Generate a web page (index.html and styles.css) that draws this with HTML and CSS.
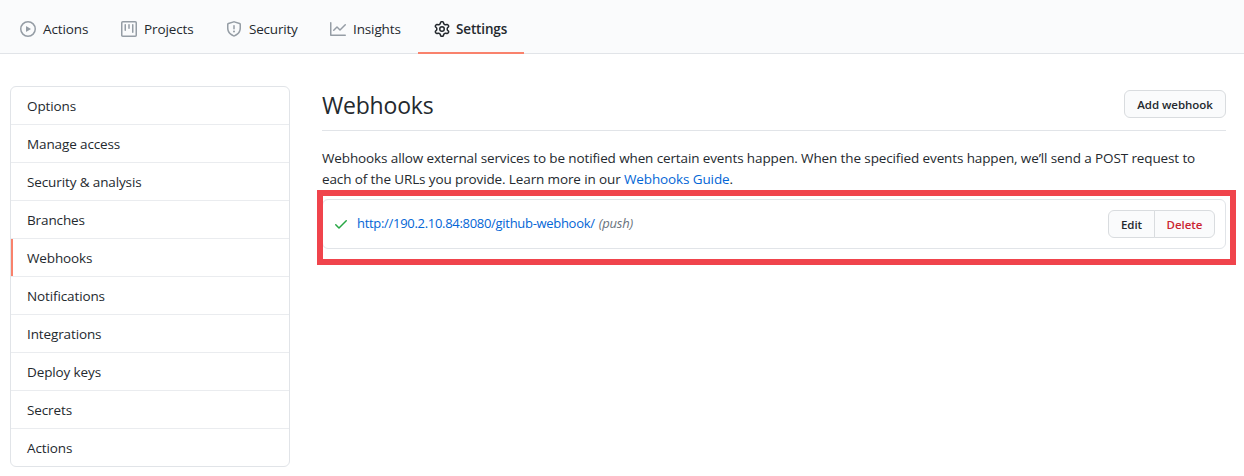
FILE: index.html
```html
<!DOCTYPE html>
<html lang="en">
<head>
<meta charset="utf-8">
<title>Webhooks</title>
<link rel="stylesheet" href="styles.css">
</head>
<body>
<nav class="tabs">
  <a class="tab tab-actions"><svg class="icon" viewBox="0 0 16 16"><path fill-rule="evenodd" d="M1.5 8a6.5 6.5 0 1113 0 6.5 6.5 0 01-13 0zM8 0a8 8 0 100 16A8 8 0 008 0zM6.379 5.227A.25.25 0 006 5.442v5.117a.25.25 0 00.379.214l4.264-2.559a.25.25 0 000-.428L6.379 5.227z"/></svg><span>Actions</span></a>
  <a class="tab tab-projects"><svg class="icon" viewBox="0 0 16 16"><path fill-rule="evenodd" d="M1.75 0A1.75 1.75 0 000 1.75v12.5C0 15.216.784 16 1.75 16h12.5A1.75 1.75 0 0016 14.25V1.75A1.75 1.75 0 0014.25 0H1.75zM1.5 1.75a.25.25 0 01.25-.25h12.5a.25.25 0 01.25.25v12.5a.25.25 0 01-.25.25H1.75a.25.25 0 01-.25-.25V1.75zM11.75 3a.75.75 0 00-.75.75v7.5a.75.75 0 001.5 0v-7.5a.75.75 0 00-.75-.75zm-8.25.75a.75.75 0 011.5 0v5.5a.75.75 0 01-1.5 0v-5.5zM8 3a.75.75 0 00-.75.75v3.5a.75.75 0 001.5 0v-3.5A.75.75 0 008 3z"/></svg><span>Projects</span></a>
  <a class="tab tab-security"><svg class="icon" viewBox="0 0 16 16"><path fill-rule="evenodd" d="M7.467.133a1.75 1.75 0 011.066 0l5.25 1.68A1.75 1.75 0 0115 3.48V7c0 1.566-.32 3.182-1.303 4.682-.983 1.498-2.585 2.813-5.032 3.855a1.7 1.7 0 01-1.33 0c-2.447-1.042-4.049-2.357-5.032-3.855C1.32 10.182 1 8.566 1 7V3.48a1.75 1.75 0 011.217-1.667l5.25-1.68zm.61 1.429a.25.25 0 00-.153 0l-5.25 1.68a.25.25 0 00-.174.238V7c0 1.358.275 2.666 1.057 3.86.784 1.194 2.121 2.34 4.366 3.297a.2.2 0 00.154 0c2.245-.956 3.582-2.104 4.366-3.298C13.225 9.666 13.5 8.36 13.5 7V3.48a.25.25 0 00-.174-.237l-5.25-1.68zM9 10.5a1 1 0 11-2 0 1 1 0 012 0zm-.25-5.75a.75.75 0 10-1.5 0v3a.75.75 0 001.5 0v-3z"/></svg><span>Security</span></a>
  <a class="tab tab-insights"><svg class="icon" viewBox="0 0 16 16"><path fill-rule="evenodd" d="M1.5 1.75a.75.75 0 00-1.5 0v12.5c0 .414.336.75.75.75h14.5a.75.75 0 000-1.5H1.5V1.75zm14.28 2.53a.75.75 0 00-1.06-1.06L10 7.94 7.53 5.47a.75.75 0 00-1.06 0L3.22 8.72a.75.75 0 001.06 1.06L7 7.06l2.47 2.47a.75.75 0 001.06 0l5.25-5.25z"/></svg><span>Insights</span></a>
  <a class="tab tab-settings"><svg class="icon" viewBox="0 0 16 16"><path fill-rule="evenodd" d="M7.429 1.525a6.593 6.593 0 011.142 0c.036.003.108.036.137.146l.289 1.105c.147.56.55.967.997 1.189.174.086.341.183.501.29.417.278.97.423 1.53.27l1.102-.303c.11-.03.175.016.195.046.219.31.41.641.573.989.014.031.022.11-.059.19l-.815.806c-.411.406-.562.957-.53 1.456a4.588 4.588 0 010 .582c-.032.499.119 1.05.53 1.456l.815.806c.08.08.073.159.059.19a6.494 6.494 0 01-.573.99c-.02.029-.086.074-.195.045l-1.103-.303c-.559-.153-1.112-.008-1.529.27-.16.107-.327.204-.5.29-.449.222-.851.628-.998 1.189l-.289 1.105c-.029.11-.101.143-.137.146a6.613 6.613 0 01-1.142 0c-.036-.003-.108-.037-.137-.146l-.289-1.105c-.147-.56-.55-.967-.997-1.189a4.502 4.502 0 01-.501-.29c-.417-.278-.97-.423-1.53-.27l-1.102.303c-.11.03-.175-.016-.195-.046a6.492 6.492 0 01-.573-.989c-.014-.031-.022-.11.059-.19l.815-.806c.411-.406.562-.957.53-1.456a4.587 4.587 0 010-.582c.032-.499-.119-1.05-.53-1.456l-.815-.806c-.08-.08-.073-.159-.059-.19a6.44 6.44 0 01.573-.99c.02-.029.086-.075.195-.045l1.103.303c.559.153 1.112.008 1.529-.27.16-.107.327-.204.5-.29.449-.222.851-.628.998-1.189l.289-1.105c.029-.11.101-.143.137-.146zM8 0c-.236 0-.47.01-.701.03-.743.065-1.29.615-1.458 1.261l-.29 1.106c-.017.066-.078.158-.211.224a5.994 5.994 0 00-.668.386c-.123.082-.233.09-.3.071L3.27 2.776c-.644-.177-1.392.02-1.82.63a7.977 7.977 0 00-.704 1.217c-.315.675-.111 1.422.363 1.891l.815.806c.05.048.098.147.088.294a6.084 6.084 0 000 .772c.01.147-.038.246-.088.294l-.815.806c-.474.469-.678 1.216-.363 1.891.2.428.436.835.704 1.218.428.609 1.176.806 1.82.63l1.103-.303c.066-.019.176-.011.299.071.213.143.436.272.668.386.133.066.194.158.212.224l.289 1.106c.169.646.715 1.196 1.458 1.26a8.094 8.094 0 001.402 0c.743-.064 1.29-.614 1.458-1.26l.29-1.106c.017-.066.078-.158.211-.224a5.98 5.98 0 00.668-.386c.123-.082.233-.09.3-.071l1.102.302c.644.177 1.392-.02 1.82-.63.268-.382.505-.789.704-1.217.315-.675.111-1.422-.364-1.891l-.814-.806c-.05-.048-.098-.147-.088-.294a6.1 6.1 0 000-.772c-.01-.147.039-.246.088-.294l.814-.806c.475-.469.679-1.216.364-1.891a7.992 7.992 0 00-.704-1.218c-.428-.609-1.176-.806-1.82-.63l-1.103.303c-.066.019-.176.011-.299-.071a5.991 5.991 0 00-.668-.386c-.133-.066-.194-.158-.212-.224L10.16 1.29C9.99.645 9.444.095 8.701.031A8.094 8.094 0 008 0zm1.5 8a1.5 1.5 0 11-3 0 1.5 1.5 0 013 0zM11 8a3 3 0 11-6 0 3 3 0 016 0z"/></svg><span>Settings</span></a>
</nav>
<div class="layout">
  <nav class="menu">
    <a class="menu-item">Options</a>
    <a class="menu-item">Manage access</a>
    <a class="menu-item">Security &amp; analysis</a>
    <a class="menu-item">Branches</a>
    <a class="menu-item selected">Webhooks</a>
    <a class="menu-item">Notifications</a>
    <a class="menu-item">Integrations</a>
    <a class="menu-item">Deploy keys</a>
    <a class="menu-item">Secrets</a>
    <a class="menu-item">Actions</a>
  </nav>
  <main class="content">
    <header class="subhead">
      <h1>Webhooks</h1>
      <button class="btn add">Add webhook</button>
    </header>
    <p class="intro">Webhooks allow external services to be notified when certain events happen. When the specified events happen, we’ll send a POST request to<br>each of the URLs you provide. Learn more in our <a class="link">Webhooks Guide</a>.</p>
    <div class="hook">
      <svg class="check" viewBox="0 0 16 16"><path fill-rule="evenodd" d="M13.78 4.22a.75.75 0 010 1.06l-7.25 7.25a.75.75 0 01-1.06 0L2.22 9.28a.75.75 0 011.06-1.06L6 10.94l6.72-6.72a.75.75 0 011.06 0z"/></svg>
      <a class="link url">http://190.2.10.84:8080/github-webhook/</a>
      <em class="event">(push)</em>
      <div class="group"><button class="btn edit">Edit</button><button class="btn delete">Delete</button></div>
      <div class="highlight"></div>
    </div>
  </main>
</div>
</body>
</html>
```

FILE: styles.css
```css
* { box-sizing: border-box; }
body {
  margin: 0;
  height: 476px;
  overflow: hidden;
  background: #fff;
  color: #24292e;
  font: 13.5px/21px "Open Sans", "Noto Sans", sans-serif;
  letter-spacing: -0.12px;
  white-space: nowrap;
}
.tabs {
  display: flex;
  height: 54px;
  padding-left: 4px;
  background: #fafbfc;
  border-bottom: 1px solid #e1e4e8;
}
.tab {
  display: flex;
  align-items: center;
  gap: 7px;
  height: 54px;
  padding: 6px 0 0 16px;
  border-bottom: 2px solid transparent;
}
.tab .icon { margin-bottom: 1px; }
.tab-actions { width: 101px; }
.tab-projects { width: 105px; }
.tab-security { width: 104px; letter-spacing: -0.2px; }
.tab-insights { width: 104px; }
.tab-settings {
  width: 106px;
  gap: 6px;
  border-color: #f9826c;
  font-weight: 600;
  letter-spacing: -0.15px;
}
.icon { flex: none; width: 16px; height: 16px; fill: #959da5; }
.tab-settings .icon { fill: #24292e; }
.layout { display: flex; gap: 32px; padding: 32px 18px 0 10px; }
.menu {
  flex: none;
  width: 280px;
  height: 381px;
  border: 1px solid #e1e4e8;
  border-radius: 6px;
  overflow: hidden;
}
.menu-item {
  display: block;
  height: 38px;
  padding: 9px 16px 7px;
  border-bottom: 1px solid #eaecef;
}
.menu-item:last-child { border-bottom: 0; }
.selected { box-shadow: inset 2px 0 #f9826c; }
.content { flex: 1; min-width: 0; }
.subhead {
  display: flex;
  justify-content: space-between;
  height: 45px;
  padding-top: 4px;
  border-bottom: 1px solid #e1e4e8;
}
h1 { margin: -1px 0 0; font-size: 23px; line-height: 32px; font-weight: 400; letter-spacing: -0.2px; }
.btn {
  height: 28px;
  padding: 1px 0 0;
  border: 1px solid #d9dcdf;
  border-radius: 6px;
  background: #fafbfc;
  color: #24292e;
  font: 600 11.5px/20px "Open Sans", "Noto Sans", sans-serif;
  letter-spacing: -0.05px;
}
.add { width: 102px; }
.intro { margin: 17px 0 9px; }
.link { color: #0366d6; }
.hook {
  position: relative;
  display: flex;
  align-items: center;
  height: 50px;
  padding: 0 10px;
  border: 1px solid #e1e4e8;
  border-radius: 6px;
  font-size: 13px;
}
.check { width: 16px; height: 16px; margin: -1px 8px 0 0; fill: #28a745; }
.url { margin-top: -2px; letter-spacing: -0.3px; }
.event { margin: -2px 0 0 4px; color: #6a737d; font-size: 13px; letter-spacing: -0.2px; }
.group { display: flex; margin-left: auto; }
.edit { width: 47px; border-radius: 6px 0 0 6px; }
.delete { width: 61px; margin-left: -1px; border-radius: 0 6px 6px 0; color: #cb2431; }
.highlight {
  position: absolute;
  inset: -10px -11px -17px -6px;
  border: 6px solid #f0444c;
}
```
